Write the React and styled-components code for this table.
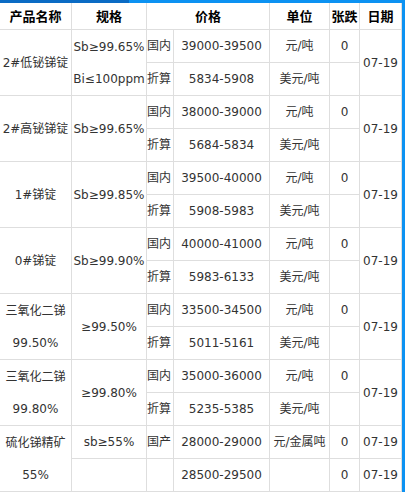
import React from "react";
import styled, { createGlobalStyle } from "styled-components";

const GlobalStyle = createGlobalStyle`
  body {
    margin: 0;
    background: #fff;
    font-family: "DejaVu Sans", "Noto Sans CJK SC", sans-serif;
  }
`;

const Panel = styled.div`
  width: 405px;
  display: flex;
  flex-direction: column;
`;

const TopBar = styled.div`
  height: 3px;
  display: flex;
`;

const ActiveTab = styled.div`
  width: 129px;
  background: #0a6bc4;
`;

const RestBar = styled.div`
  flex: 1;
  background: #0c92f2;
`;

const Body = styled.div`
  border-right: 3px solid #0c92f2;
`;

const Table = styled.table`
  width: 402px;
  table-layout: fixed;
  border-collapse: separate;
  border-spacing: 0;
  font-size: 12px;
  color: #333;
`;

const HeadRow = styled.tr`
  height: 27px;
`;

const Row = styled.tr`
  height: 33px;
`;

const Th = styled.th`
  padding: 0;
  font-family: "Noto Sans CJK SC", sans-serif;
  font-size: 13px;
  font-weight: bold;
  color: #000;
  text-align: center;
  border-right: 1px solid #dedede;
  border-bottom: 1px solid #dedede;
  line-height: 16px;
  white-space: nowrap;
`;

const Td = styled.td`
  padding: 0;
  text-align: ${(p) => p.$align || "center"};
  vertical-align: middle;
  border-right: 1px solid #dedede;
  border-bottom: 1px solid #dedede;
  line-height: 32px;
  white-space: nowrap;
`;

const Line = styled.div`
  height: 32px;
  line-height: 32px;
  overflow: hidden;
`;

const widths = [72, 75, 27, 96, 60, 30, 42];

const products = [
  { name: ["2#低铋锑锭"], spec: ["Sb≥99.65%", "Bi≤100ppm"], domestic: "39000-39500", converted: "5834-5908" },
  { name: ["2#高铋锑锭"], spec: ["Sb≥99.65%"], domestic: "38000-39000", converted: "5684-5834" },
  { name: ["1#锑锭"], spec: ["Sb≥99.85%"], domestic: "39500-40000", converted: "5908-5983" },
  { name: ["0#锑锭"], spec: ["Sb≥99.90%"], domestic: "40000-41000", converted: "5983-6133" },
  { name: ["三氧化二锑", "99.50%"], spec: ["≥99.50%"], domestic: "33500-34500", converted: "5011-5161" },
  { name: ["三氧化二锑", "99.80%"], spec: ["≥99.80%"], domestic: "35000-36000", converted: "5235-5385" },
];

const Lines = ({ items }) =>
  items.map((t, i) => <Line key={i}>{t}</Line>);

const ProductRows = ({ item }) => (
  <>
    <Row>
      <Td rowSpan={2}>
        <Lines items={item.name} />
      </Td>
      <Td rowSpan={2}>
        <Lines items={item.spec} />
      </Td>
      <Td $align="left">国内</Td>
      <Td>{item.domestic}</Td>
      <Td>元/吨</Td>
      <Td>0</Td>
      <Td rowSpan={2}>07-19</Td>
    </Row>
    <Row>
      <Td $align="left">折算</Td>
      <Td>{item.converted}</Td>
      <Td>美元/吨</Td>
      <Td></Td>
    </Row>
  </>
);

export default function App() {
  return (
    <>
      <GlobalStyle />
      <Panel>
        <TopBar>
          <ActiveTab />
          <RestBar />
        </TopBar>
        <Body>
          <Table>
            <colgroup>
              {widths.map((w, i) => (
                <col key={i} style={{ width: w }} />
              ))}
            </colgroup>
            <tbody>
              <HeadRow>
                <Th>产品名称</Th>
                <Th>规格</Th>
                <Th colSpan={2}>价格</Th>
                <Th>单位</Th>
                <Th>张跌</Th>
                <Th>日期</Th>
              </HeadRow>
              {products.map((p, i) => (
                <ProductRows key={i} item={p} />
              ))}
              <Row>
                <Td rowSpan={2}>
                  <Lines items={["硫化锑精矿", "55%"]} />
                </Td>
                <Td>sb≥55%</Td>
                <Td $align="left">国产</Td>
                <Td>28000-29000</Td>
                <Td>元/金属吨</Td>
                <Td>0</Td>
                <Td>07-19</Td>
              </Row>
              <Row>
                <Td></Td>
                <Td></Td>
                <Td>28500-29500</Td>
                <Td></Td>
                <Td>0</Td>
                <Td>07-19</Td>
              </Row>
            </tbody>
          </Table>
        </Body>
      </Panel>
    </>
  );
}
